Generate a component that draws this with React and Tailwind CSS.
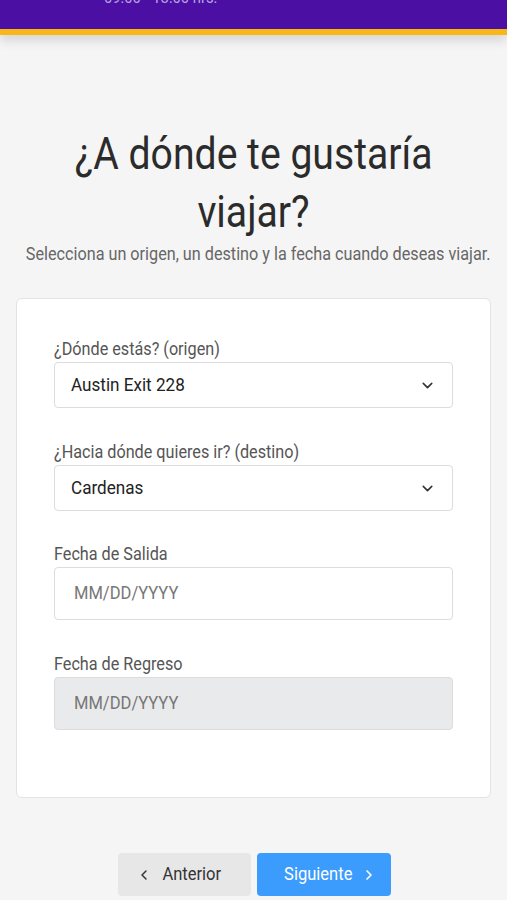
import React from 'react';
import { ChevronDown, ChevronLeft, ChevronRight } from 'lucide-react';

const font = { fontFamily: 'Roboto, "Noto Sans", sans-serif' };

// Roboto squeezed to look like the condensed face in the screenshot
function Cond({ children, center, wide }) {
  return (
    <span
      className={`inline-block whitespace-nowrap ${wide ? 'scale-x-[0.9]' : 'scale-x-[0.87]'} ${
        center ? 'origin-center' : 'origin-left'
      }`}
    >
      {children}
    </span>
  );
}

function Label({ children }) {
  return (
    <div className="text-[18px] leading-[20px] text-[#555] mb-[3px]">
      <Cond wide>{children}</Cond>
    </div>
  );
}

function SelectBox({ value }) {
  return (
    <div className="h-[46px] flex items-center justify-between pl-[16px] pr-[16px] bg-white border border-[#dcdcdc] rounded-[4px]">
      <span className="text-[19px] text-[#222]">
        <Cond wide>{value}</Cond>
      </span>
      <ChevronDown size={17} strokeWidth={2.2} className="text-[#333]" />
    </div>
  );
}

function DateBox({ disabled }) {
  return (
    <div
      className={`h-[53px] flex items-center pl-[19px] border border-[#dcdcdc] rounded-[4px] ${
        disabled ? 'bg-[#e9eaeb]' : 'bg-white'
      }`}
    >
      <span className="text-[19px] text-[#777]">
        <Cond>MM/DD/YYYY</Cond>
      </span>
    </div>
  );
}

export default function App() {
  return (
    <div className="min-h-[900px] w-[507px] bg-[#f5f5f5] overflow-hidden" style={font}>
      {/* Header */}
      <div className="relative z-10 shadow-[0_6px_10px_rgba(0,0,0,0.12)]">
        <div className="h-[29px] bg-[#4c0fa4] relative overflow-hidden">
          <div className="absolute left-[104px] top-[-13px] text-[17px] leading-[20px] text-[#b7a3e2]">
            <Cond>09:00 - 18:00 hrs.</Cond>
          </div>
        </div>
        <div className="h-[6px] bg-[#f8b716]" />
      </div>

      {/* Title */}
      <div className="pt-[90px] text-center">
        <h1 className="text-[45px] leading-[58px] text-[#2b2b2b]">
          <Cond center>¿A dónde te gustaría</Cond>
          <br />
          <Cond center>viajar?</Cond>
        </h1>
        <p className="mt-[2px] text-[18px] leading-[22px] text-[#666]">
          <Cond center wide>Selecciona un origen, un destino y la fecha cuando deseas viajar.</Cond>
        </p>
      </div>

      {/* Card */}
      <div className="mx-[16px] mt-[33px] w-[475px] h-[500px] bg-white border border-[#e3e3e3] rounded-[6px] px-[37px] pt-[40px]">
        <Label>¿Dónde estás? (origen)</Label>
        <SelectBox value="Austin Exit 228" />

        <div className="mt-[34px]">
          <Label>¿Hacia dónde quieres ir? (destino)</Label>
          <SelectBox value="Cardenas" />
        </div>

        <div className="mt-[33px]">
          <Label>Fecha de Salida</Label>
          <DateBox />
        </div>

        <div className="mt-[34px]">
          <Label>Fecha de Regreso</Label>
          <DateBox disabled />
        </div>
      </div>

      {/* Buttons */}
      <div className="mt-[55px] flex justify-center gap-[6px] pl-[1px]">
        <button className="w-[133px] h-[43px] rounded-[4px] bg-[#e7e7e7] flex items-center pl-[18px] gap-[6px] text-[19px] text-[#333]">
          <ChevronLeft size={16} strokeWidth={2.2} className="shrink-0" />
          <Cond center>Anterior</Cond>
        </button>
        <button className="w-[134px] h-[43px] rounded-[4px] bg-[#3c9cfd] flex items-center pl-[22px] gap-[4px] text-[19px] text-white">
          <Cond center>Siguiente</Cond>
          <ChevronRight size={16} strokeWidth={2.5} className="shrink-0" />
        </button>
      </div>
    </div>
  );
}
